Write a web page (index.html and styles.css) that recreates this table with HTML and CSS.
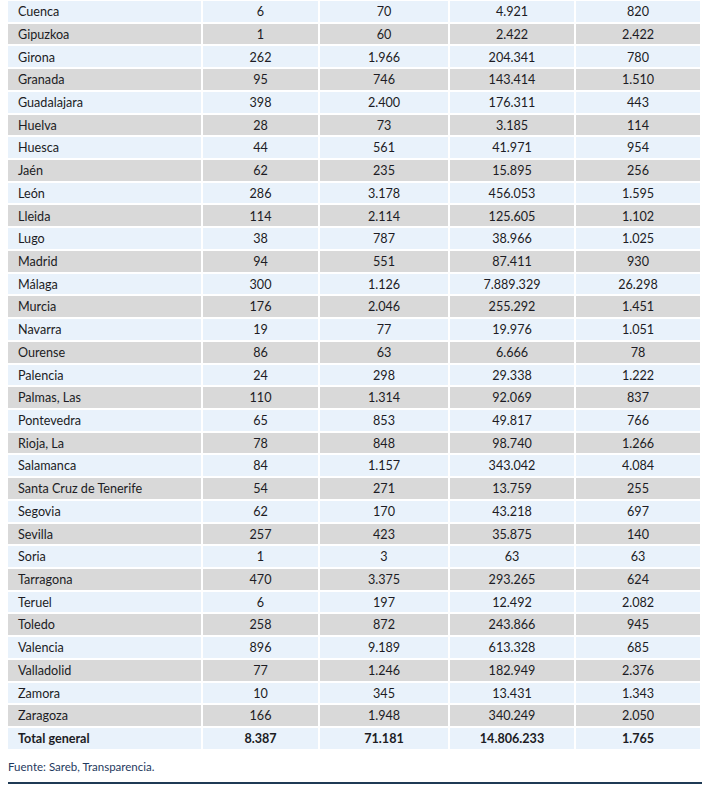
FILE: index.html
```html
<!DOCTYPE html>
<html lang="es">
<head>
<meta charset="utf-8">
<link rel="stylesheet" href="styles.css">
</head>
<body>
<div class="table">
  <div class="row blue"><div class="name">Cuenca</div><div>6</div><div>70</div><div>4.921</div><div>820</div></div>
  <div class="row gray"><div class="name">Gipuzkoa</div><div>1</div><div>60</div><div>2.422</div><div>2.422</div></div>
  <div class="row blue"><div class="name">Girona</div><div>262</div><div>1.966</div><div>204.341</div><div>780</div></div>
  <div class="row gray"><div class="name">Granada</div><div>95</div><div>746</div><div>143.414</div><div>1.510</div></div>
  <div class="row blue"><div class="name">Guadalajara</div><div>398</div><div>2.400</div><div>176.311</div><div>443</div></div>
  <div class="row gray"><div class="name">Huelva</div><div>28</div><div>73</div><div>3.185</div><div>114</div></div>
  <div class="row blue"><div class="name">Huesca</div><div>44</div><div>561</div><div>41.971</div><div>954</div></div>
  <div class="row gray"><div class="name">Jaén</div><div>62</div><div>235</div><div>15.895</div><div>256</div></div>
  <div class="row blue"><div class="name">León</div><div>286</div><div>3.178</div><div>456.053</div><div>1.595</div></div>
  <div class="row gray"><div class="name">Lleida</div><div>114</div><div>2.114</div><div>125.605</div><div>1.102</div></div>
  <div class="row blue"><div class="name">Lugo</div><div>38</div><div>787</div><div>38.966</div><div>1.025</div></div>
  <div class="row gray"><div class="name">Madrid</div><div>94</div><div>551</div><div>87.411</div><div>930</div></div>
  <div class="row blue"><div class="name">Málaga</div><div>300</div><div>1.126</div><div>7.889.329</div><div>26.298</div></div>
  <div class="row gray"><div class="name">Murcia</div><div>176</div><div>2.046</div><div>255.292</div><div>1.451</div></div>
  <div class="row blue"><div class="name">Navarra</div><div>19</div><div>77</div><div>19.976</div><div>1.051</div></div>
  <div class="row gray"><div class="name">Ourense</div><div>86</div><div>63</div><div>6.666</div><div>78</div></div>
  <div class="row blue"><div class="name">Palencia</div><div>24</div><div>298</div><div>29.338</div><div>1.222</div></div>
  <div class="row gray"><div class="name">Palmas, Las</div><div>110</div><div>1.314</div><div>92.069</div><div>837</div></div>
  <div class="row blue"><div class="name">Pontevedra</div><div>65</div><div>853</div><div>49.817</div><div>766</div></div>
  <div class="row gray"><div class="name">Rioja, La</div><div>78</div><div>848</div><div>98.740</div><div>1.266</div></div>
  <div class="row blue"><div class="name">Salamanca</div><div>84</div><div>1.157</div><div>343.042</div><div>4.084</div></div>
  <div class="row gray"><div class="name">Santa Cruz de Tenerife</div><div>54</div><div>271</div><div>13.759</div><div>255</div></div>
  <div class="row blue"><div class="name">Segovia</div><div>62</div><div>170</div><div>43.218</div><div>697</div></div>
  <div class="row gray"><div class="name">Sevilla</div><div>257</div><div>423</div><div>35.875</div><div>140</div></div>
  <div class="row blue"><div class="name">Soria</div><div>1</div><div>3</div><div>63</div><div>63</div></div>
  <div class="row gray"><div class="name">Tarragona</div><div>470</div><div>3.375</div><div>293.265</div><div>624</div></div>
  <div class="row blue"><div class="name">Teruel</div><div>6</div><div>197</div><div>12.492</div><div>2.082</div></div>
  <div class="row gray"><div class="name">Toledo</div><div>258</div><div>872</div><div>243.866</div><div>945</div></div>
  <div class="row blue"><div class="name">Valencia</div><div>896</div><div>9.189</div><div>613.328</div><div>685</div></div>
  <div class="row gray"><div class="name">Valladolid</div><div>77</div><div>1.246</div><div>182.949</div><div>2.376</div></div>
  <div class="row blue"><div class="name">Zamora</div><div>10</div><div>345</div><div>13.431</div><div>1.343</div></div>
  <div class="row gray"><div class="name">Zaragoza</div><div>166</div><div>1.948</div><div>340.249</div><div>2.050</div></div>
  <div class="row blue total"><div class="name">Total general</div><div>8.387</div><div>71.181</div><div>14.806.233</div><div>1.765</div></div>
</div>
<p class="source">Fuente: Sareb, Transparencia.</p>
<div class="rule"></div>
</body>
</html>
```

FILE: styles.css
```css
html, body {
  margin: 0;
  padding: 0;
  background: #ffffff;
}
body {
  padding: 1px 13px 0 8px;
  font-family: Lato, "Liberation Sans", sans-serif;
  font-size: 12.6px;
  color: #1c1c24;
}
.table {
  display: flex;
  flex-direction: column;
  gap: 2px;
  width: 692px;
}
.row {
  display: grid;
  grid-template-columns: 193px 115px 128px 124px 124px;
  column-gap: 2px;
  height: 20.73px;
}
.row > div {
  display: flex;
  align-items: center;
  justify-content: center;
  line-height: 1;
  padding-top: 2px;
}
.row > .name {
  justify-content: flex-start;
  padding-left: 10px;
}
.blue > div { background: #e9f2fb; }
.gray > div { background: #d9d9d9; }
.total > div { font-weight: bold; }
.source {
  margin: 11px 0 0 0;
  font-size: 11.5px;
  line-height: 14px;
  color: #1f3a60;
}
.rule {
  margin-top: 8px;
  width: 694px;
  height: 2px;
  background: #1f3a55;
}
```
